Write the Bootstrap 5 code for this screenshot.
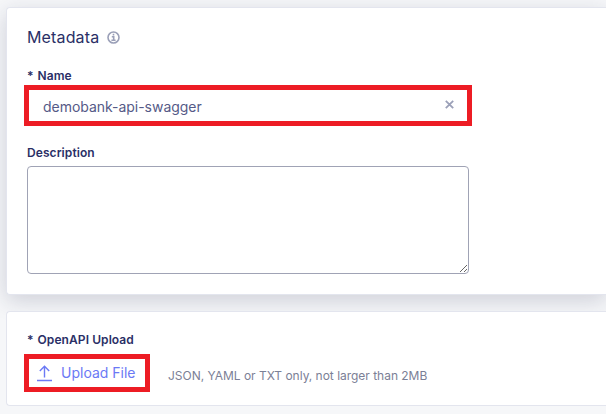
<!DOCTYPE html>
<html lang="en">
<head>
<meta charset="utf-8">
<meta name="viewport" content="width=device-width, initial-scale=1">
<title>API metadata</title>
<link href="https://cdn.jsdelivr.net/npm/bootstrap@5.3.0/dist/css/bootstrap.min.css" rel="stylesheet">
<style>
body{background:#f6f7f9;font-family:Inter,sans-serif;color:#2a2f66;height:414px;overflow:hidden}
.page{padding:7px 0 0 6px;gap:16px}
.panel{border:1px solid #e3e5ee;border-right:0;border-radius:4px 0 0 4px;padding-left:20px}
.panel-meta{height:288px;padding-top:17px;box-shadow:0 6px 22px rgba(30,35,70,.18)}
.panel-upload{height:95px;padding-top:19px}
.panel-title{font-size:16px;line-height:24px;font-weight:400;letter-spacing:.15px}
.field-label{font-size:12px;line-height:18px;font-weight:600;letter-spacing:.08px}
.field-gap{margin-top:18px}
.required-mark{margin-right:4px}
.marked,.marked:hover{border:5px solid #ed1c24;margin-left:-3px}
.name-box{width:448px;height:41px}
.name-box input{font-size:14px;line-height:20px;letter-spacing:-.03px;color:#555a87;padding:3px 0 0 14px;background:none}
.name-box svg{margin:0 13px 3px 0}
.desc{width:442px;height:108px;border:1px solid #a0a3b5;border-radius:4px;padding:8px;resize:both}
.upload-row{margin-top:5px}
.upload-btn{width:126px;height:38px;padding:0 0 0 8px;border-radius:0;font-size:14px;color:#6b79f5;background:#fff}
.upload-btn span{margin:-1px 0 0 9px}
.hint{font-size:12px;line-height:18px;letter-spacing:-.02px;color:#7b8096;margin:5px 0 0 18px}
</style>
<script src="https://cdn.jsdelivr.net/npm/bootstrap@5.3.0/dist/js/bootstrap.bundle.min.js"></script>
</head>
<body>
<main class="page d-flex flex-column">
  <section class="panel panel-meta bg-white position-relative">
    <div class="d-flex align-items-center">
      <h1 class="panel-title mb-0">Metadata</h1>
      <svg class="ms-2" width="13" height="13" viewBox="0 0 13 13" fill="none" stroke="#9ba0b8" stroke-width="1.6"><circle cx="6.5" cy="6.5" r="5.5"/><path d="M4.8 5.8h1.9v3.4M4.4 9.2h4.2M5.7 3.6h1.6"/></svg>
    </div>
    <label class="field-label field-gap d-block" for="name"><span class="required-mark">*</span>Name</label>
    <div class="marked name-box d-flex align-items-center">
      <input id="name" class="border-0 flex-grow-1" value="demobank-api-swagger">
      <svg width="9" height="9" viewBox="0 0 9 9" stroke="#9ba0b8" stroke-width="1.8"><path d="M.8.8l7.4 7.4M8.2.8L.8 8.2"/></svg>
    </div>
    <label class="field-label field-gap d-block" for="desc">Description</label>
    <textarea id="desc" class="desc d-block mt-1"></textarea>
  </section>
  <section class="panel panel-upload bg-white position-relative">
    <div class="field-label"><span class="required-mark">*</span>OpenAPI Upload</div>
    <div class="upload-row d-flex align-items-center">
      <button class="btn marked upload-btn d-flex align-items-center" type="button">
        <svg width="15" height="17" viewBox="0 0 15 17" fill="none" stroke="#6b79f5" stroke-width="1.4"><path d="M7.5 12.5V1.5M2.8 6l4.7-4.7L12.2 6M0 15.5h15"/></svg>
        <span>Upload File</span>
      </button>
      <span class="hint">JSON, YAML or TXT only, not larger than 2MB</span>
    </div>
  </section>
</main>
</body>
</html>
